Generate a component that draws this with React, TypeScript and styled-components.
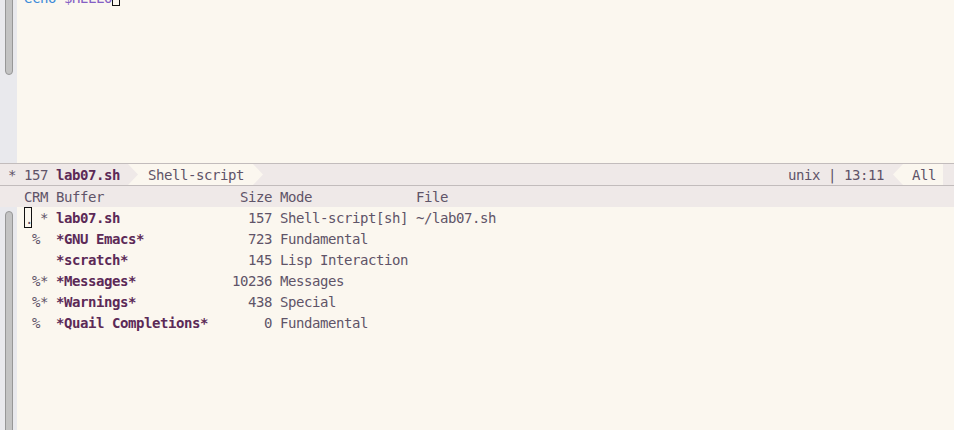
import styled, { createGlobalStyle } from "styled-components";

const GlobalStyle = createGlobalStyle`
  html, body {
    margin: 0;
    padding: 0;
    background: #fbf7ef;
    overflow: hidden;
  }
`;

const FG = "#5f5468";
const PLUM = "#5c2a57";
const BAR = "#efe9e8";
const CREAM = "#fbf7ef";

const Frame = styled.div`
  width: 954px;
  height: 430px;
  display: flex;
  flex-direction: column;
  overflow: hidden;
  background: ${CREAM};
  font-family: "DejaVu Sans Mono", "Liberation Mono", monospace;
  font-size: 14px;
  letter-spacing: -0.43px;
  line-height: 23px;
  color: ${FG};
`;

const Window = styled.div<{ h?: number }>`
  display: flex;
  height: ${(p) => (p.h ? `${p.h}px` : "auto")};
  flex: ${(p) => (p.h ? "none" : "1")};
  overflow: hidden;
`;

const Gutter = styled.div`
  width: 17px;
  flex: none;
  background: #e9e9ed;
  position: relative;
`;

const Thumb = styled.div<{ top: number; bottom: number; roundTop?: boolean; roundBottom?: boolean }>`
  position: absolute;
  left: 5px;
  width: 6px;
  top: ${(p) => p.top}px;
  bottom: ${(p) => p.bottom}px;
  background: #c3c3c3;
  border: 1px solid #979797;
  border-radius: ${(p) => (p.roundTop ? "4px 4px" : "0 0")} ${(p) => (p.roundBottom ? "4px 4px" : "0 0")};
`;

const Content = styled.div`
  flex: 1;
  padding-left: 7px;
  white-space: pre;
`;

const ScrolledLine = styled.div`
  margin-top: -15px;
  height: 21px;
  display: flex;
`;

const Word = styled.span<{ c: string }>`
  color: ${(p) => p.c};
  position: relative;
  top: 2px;
`;

const Cursor = styled.span`
  display: inline-block;
  width: 8px;
  height: 21px;
  line-height: 23px;
  box-sizing: border-box;
  border: 1px solid #111;
  vertical-align: top;
  text-align: center;
  color: ${FG};
`;

const ModeLine = styled.div`
  height: 21px;
  flex: none;
  display: flex;
  align-items: stretch;
  background: ${BAR};
  border-top: 1px solid #c2bcbc;
  border-bottom: 1px solid #c2bcbc;
  white-space: pre;
`;

const ModeLeft = styled.span`
  box-sizing: border-box;
  padding-left: 8px;
  width: 120px;
`;

const Bold = styled.b`
  color: ${PLUM};
  font-weight: bold;
`;

const Chevron = styled.span`
  height: 21px;
  padding: 0 19px 0 20px;
  margin-left: 8px;
  background: ${CREAM};
  clip-path: polygon(0 0, calc(100% - 10px) 0, 100% 50%, calc(100% - 10px) 100%, 0 100%, 10px 50%);
`;

const Spacer = styled.span`
  flex: 1;
`;

const PointLeft = styled.span`
  height: 21px;
  padding: 0 7px 0 19px;
  margin-left: 9px;
  margin-right: 11px;
  background: ${CREAM};
  clip-path: polygon(10px 0, 100% 0, 100% 100%, 10px 100%, 0 50%);
`;

const HeaderLine = styled.div`
  height: 21px;
  flex: none;
  background: ${BAR};
  padding-left: 24px;
`;

const Row = styled.div`
  display: grid;
  grid-template-columns: 24px 160px 48px 128px 1fr;
  column-gap: 8px;
  height: 21px;
  white-space: pre;
`;

const Cell = styled.span<{ right?: boolean }>`
  text-align: ${(p) => (p.right ? "right" : "left")};
`;

const ListBody = styled.div`
  flex: 1;
  padding-left: 7px;
`;

type Buf = { crm: string; name: string; size: string; mode: string; file: string; current?: boolean };

const buffers: Buf[] = [
  { crm: "  *", name: "lab07.sh", size: "157", mode: "Shell-script[sh]", file: "~/lab07.sh", current: true },
  { crm: " %", name: "*GNU Emacs*", size: "723", mode: "Fundamental", file: "" },
  { crm: "", name: "*scratch*", size: "145", mode: "Lisp Interaction", file: "" },
  { crm: " %*", name: "*Messages*", size: "10236", mode: "Messages", file: "" },
  { crm: " %*", name: "*Warnings*", size: "438", mode: "Special", file: "" },
  { crm: " %", name: "*Quail Completions*", size: "0", mode: "Fundamental", file: "" },
];

export default function App() {
  return (
    <Frame>
      <GlobalStyle />
      <Window h={163}>
        <Gutter>
          <Thumb top={-10} bottom={88} roundBottom />
        </Gutter>
        <Content>
          <ScrolledLine>
            <Word c="#3a8ad9">echo</Word>
            <Word c={FG}> </Word>
            <Word c="#8560c4">$HELLO</Word>
            <Cursor> </Cursor>
          </ScrolledLine>
        </Content>
      </Window>

      <ModeLine>
        <ModeLeft>
          * 157 <Bold>lab07.sh</Bold>
        </ModeLeft>
        <Chevron>Shell-script</Chevron>
        <Spacer />
        <span>unix | 13:11</span>
        <PointLeft>All</PointLeft>
      </ModeLine>

      <HeaderLine>
        <Row>
          <Cell>CRM</Cell>
          <Cell>Buffer</Cell>
          <Cell right>Size</Cell>
          <Cell>Mode</Cell>
          <Cell>File</Cell>
        </Row>
      </HeaderLine>

      <Window>
        <Gutter>
          <Thumb top={4} bottom={-10} roundTop />
        </Gutter>
        <ListBody>
          {buffers.map((b) => (
            <Row key={b.name}>
              <Cell>
                {b.current ? (
                  <>
                    <Cursor>.</Cursor>
                    {" *"}
                  </>
                ) : (
                  b.crm
                )}
              </Cell>
              <Cell>
                <Bold>{b.name}</Bold>
              </Cell>
              <Cell right>{b.size}</Cell>
              <Cell>{b.mode}</Cell>
              <Cell>{b.file}</Cell>
            </Row>
          ))}
        </ListBody>
      </Window>
    </Frame>
  );
}
